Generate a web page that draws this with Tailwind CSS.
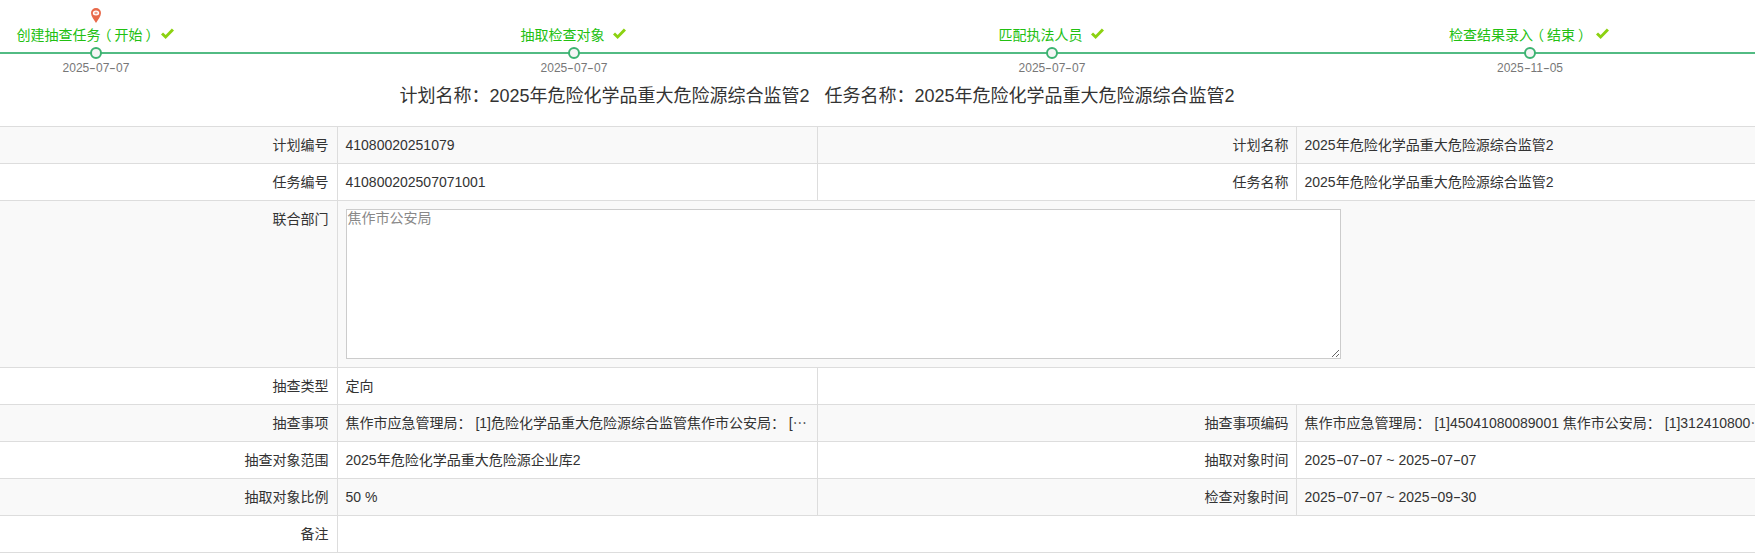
<!DOCTYPE html>
<html lang="zh-CN">
  <head>
    <meta charset="UTF-8" />
    <title>抽查任务详情</title>
    <script src="https://cdn.jsdelivr.net/npm/@tailwindcss/browser@4"></script>
  </head>
  <body class="h-[555px] overflow-hidden bg-white text-[14px] text-[#333] [text-spacing-trim:space-all] font-['Liberation_Sans','Noto_Sans_CJK_SC',sans-serif]">
    <!-- ============ STEPS ============ -->
    <div class="relative h-[84px] w-[1755px] overflow-hidden">
      <div class="absolute left-0 right-0 top-[52px] h-[2px] bg-[#52bb83]"></div>
      <ul class="relative -ml-[143px] flex w-[1912px]">
        <li class="flex w-[478px] flex-col items-center">
          <svg class="mt-[8px] h-[15px] w-[10px]" viewBox="0 0 10 15">
            <path fill="#e8694a" d="M5 0a5 5 0 0 1 5 5c0 3.500-3 6.500-5 10-2-3.500-5-6.500-5-10a5 5 0 0 1 5-5z" />
            <ellipse cx="5" cy="5" rx="3.200" ry="2.500" fill="#fff" />
            <ellipse cx="5" cy="5" rx="1.700" ry="1.200" fill="#f0a08c" />
          </svg>
          <div class="mt-[2px] flex h-[20px] items-center pr-[2px] text-[#22c012]">
            <span>创建抽查任务<span class="inline-block -translate-x-[3px]">（</span>开始<span class="inline-block translate-x-[3px]">）</span></span>
            <svg class="ml-[4px] h-[12px] w-[13px] -translate-y-[1px]" viewBox="0 0 14 12"><path fill="#8cd211" d="M0 6.500 2.200 4.300 5 7 11.700 0 14 2.300 5 11.500z" /></svg>
          </div>
          <div class="mt-[2px] h-[12px] w-[12px] rounded-full border-[2.5px] border-[#3cb371] bg-[#f5f5f5]"></div>
          <div class="text-[12px] leading-[18px] text-[#777]">2025<span class="inline-block w-[.56em] scale-x-[1.7] text-center">-</span>07<span class="inline-block w-[.56em] scale-x-[1.7] text-center">-</span>07</div>
        </li>
        <li class="flex w-[478px] flex-col items-center pt-[25px]">
          <div class="flex h-[20px] items-center pr-[2px] text-[#22c012]">
            <span>抽取检查对象</span>
            <svg class="ml-[8px] h-[12px] w-[13px] -translate-y-[1px]" viewBox="0 0 14 12"><path fill="#8cd211" d="M0 6.500 2.200 4.300 5 7 11.700 0 14 2.300 5 11.500z" /></svg>
          </div>
          <div class="mt-[2px] h-[12px] w-[12px] rounded-full border-[2.5px] border-[#3cb371] bg-[#f5f5f5]"></div>
          <div class="text-[12px] leading-[18px] text-[#777]">2025<span class="inline-block w-[.56em] scale-x-[1.7] text-center">-</span>07<span class="inline-block w-[.56em] scale-x-[1.7] text-center">-</span>07</div>
        </li>
        <li class="flex w-[478px] flex-col items-center pt-[25px]">
          <div class="flex h-[20px] items-center pr-[2px] text-[#22c012]">
            <span>匹配执法人员</span>
            <svg class="ml-[8px] h-[12px] w-[13px] -translate-y-[1px]" viewBox="0 0 14 12"><path fill="#8cd211" d="M0 6.500 2.200 4.300 5 7 11.700 0 14 2.300 5 11.500z" /></svg>
          </div>
          <div class="mt-[2px] h-[12px] w-[12px] rounded-full border-[2.5px] border-[#3cb371] bg-[#f5f5f5]"></div>
          <div class="text-[12px] leading-[18px] text-[#777]">2025<span class="inline-block w-[.56em] scale-x-[1.7] text-center">-</span>07<span class="inline-block w-[.56em] scale-x-[1.7] text-center">-</span>07</div>
        </li>
        <li class="flex w-[478px] flex-col items-center pt-[25px]">
          <div class="flex h-[20px] items-center pr-[2px] text-[#22c012]">
            <span>检查结果录入<span class="inline-block -translate-x-[3px]">（</span>结束<span class="inline-block translate-x-[3px]">）</span></span>
            <svg class="ml-[7px] h-[12px] w-[13px] -translate-y-[1px]" viewBox="0 0 14 12"><path fill="#8cd211" d="M0 6.500 2.200 4.300 5 7 11.700 0 14 2.300 5 11.500z" /></svg>
          </div>
          <div class="mt-[2px] h-[12px] w-[12px] rounded-full border-[2.5px] border-[#3cb371] bg-[#f5f5f5]"></div>
          <div class="text-[12px] leading-[18px] text-[#777]">2025<span class="inline-block w-[.56em] scale-x-[1.7] text-center">-</span>11<span class="inline-block w-[.56em] scale-x-[1.7] text-center">-</span>05</div>
        </li>
      </ul>
    </div>

    <!-- Title -->
    <h1 class="h-[42px] w-[1634px] pt-[1px] text-center text-[18px] leading-[22px]">计划名称：2025年危险化学品重大危险源综合监管2&nbsp;&nbsp;&nbsp;任务名称：2025年危险化学品重大危险源综合监管2</h1>

    <!-- ============ DETAIL TABLE ============ -->
    <table class="w-[1755px] table-fixed border-collapse border-t border-[#ddd]">
      <colgroup>
        <col class="w-[337px]" />
        <col class="w-[480px]" />
        <col class="w-[479px]" />
        <col class="w-[459px]" />
      </colgroup>
      <tbody>
        <tr class="h-[37px] border-b border-[#ddd] bg-[#f9f9f9]">
          <td class="border-r border-[#ddd] pr-2 text-right">计划编号</td>
          <td class="border-r border-[#ddd] pl-2">41080020251079</td>
          <td class="border-r border-[#ddd] pr-[7px] text-right">计划名称</td>
          <td class="pl-2">2025年危险化学品重大危险源综合监管2</td>
        </tr>
        <tr class="h-[37px] border-b border-[#ddd]">
          <td class="border-r border-[#ddd] pr-2 text-right">任务编号</td>
          <td class="border-r border-[#ddd] pl-2">410800202507071001</td>
          <td class="border-r border-[#ddd] pr-[7px] text-right">任务名称</td>
          <td class="pl-2">2025年危险化学品重大危险源综合监管2</td>
        </tr>
        <tr class="h-[167px] border-b border-[#ddd] bg-[#f9f9f9]">
          <td class="border-r border-[#ddd] pr-2 pt-[8px] text-right align-top">联合部门</td>
          <td colspan="3" class="pl-2 pt-[8px] align-top">
            <textarea readonly class="block h-[150px] w-[995px] border border-[#ccc] bg-white px-[1px] text-[#888] leading-[16px]">焦作市公安局</textarea>
          </td>
        </tr>
        <tr class="h-[37px] border-b border-[#ddd]">
          <td class="border-r border-[#ddd] pr-2 text-right">抽查类型</td>
          <td class="border-r border-[#ddd] pl-2">定向</td>
          <td colspan="2"></td>
        </tr>
        <tr class="h-[37px] border-b border-[#ddd] bg-[#f9f9f9]">
          <td class="border-r border-[#ddd] pr-2 text-right">抽查事项</td>
          <td class="overflow-hidden whitespace-nowrap border-r border-[#ddd] pl-2">焦作市应急管理局： [1]危险化学品重大危险源综合监管焦作市公安局： [⋯</td>
          <td class="border-r border-[#ddd] pr-[7px] text-right">抽查事项编码</td>
          <td class="overflow-hidden whitespace-nowrap pl-2">焦作市应急管理局： [1]45041080089001 焦作市公安局： [1]312410800⋯</td>
        </tr>
        <tr class="h-[37px] border-b border-[#ddd]">
          <td class="border-r border-[#ddd] pr-2 text-right">抽查对象范围</td>
          <td class="border-r border-[#ddd] pl-2">2025年危险化学品重大危险源企业库2</td>
          <td class="border-r border-[#ddd] pr-[7px] text-right">抽取对象时间</td>
          <td class="pl-2">2025<span class="inline-block w-[.56em] scale-x-[1.7] text-center">-</span>07<span class="inline-block w-[.56em] scale-x-[1.7] text-center">-</span>07 ~ 2025<span class="inline-block w-[.56em] scale-x-[1.7] text-center">-</span>07<span class="inline-block w-[.56em] scale-x-[1.7] text-center">-</span>07</td>
        </tr>
        <tr class="h-[37px] border-b border-[#ddd] bg-[#f9f9f9]">
          <td class="border-r border-[#ddd] pr-2 text-right">抽取对象比例</td>
          <td class="border-r border-[#ddd] pl-2">50 %</td>
          <td class="border-r border-[#ddd] pr-[7px] text-right">检查对象时间</td>
          <td class="pl-2">2025<span class="inline-block w-[.56em] scale-x-[1.7] text-center">-</span>07<span class="inline-block w-[.56em] scale-x-[1.7] text-center">-</span>07 ~ 2025<span class="inline-block w-[.56em] scale-x-[1.7] text-center">-</span>09<span class="inline-block w-[.56em] scale-x-[1.7] text-center">-</span>30</td>
        </tr>
        <tr class="h-[37px] border-b border-[#ddd]">
          <td class="border-r border-[#ddd] pr-2 text-right">备注</td>
          <td colspan="3"></td>
        </tr>
      </tbody>
    </table>
  </body>
</html>
